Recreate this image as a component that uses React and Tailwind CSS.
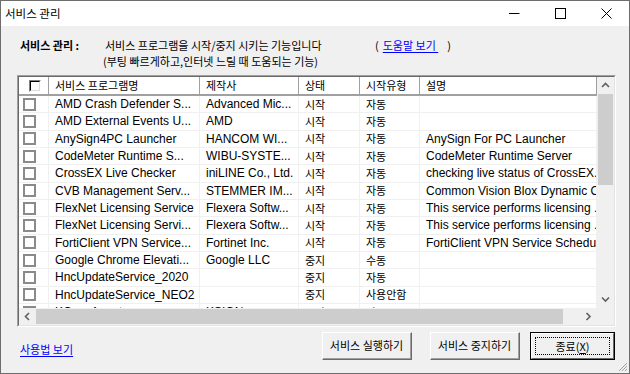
import React from 'react'

const KR = "font-['Noto_Sans_CJK_KR',sans-serif] text-[11px] leading-none"
const EN = "font-['Liberation_Sans','Noto_Sans_CJK_KR',sans-serif] text-[12px] leading-none"

const rows = [
  ['AMD Crash Defender S...', 'Advanced Mic...', '시작', '자동', ''],
  ['AMD External Events U...', 'AMD', '시작', '자동', ''],
  ['AnySign4PC Launcher', 'HANCOM WI...', '시작', '자동', 'AnySign For PC Launcher'],
  ['CodeMeter Runtime S...', 'WIBU-SYSTE...', '시작', '자동', 'CodeMeter Runtime Server'],
  ['CrossEX Live Checker', 'iniLINE Co., Ltd.', '시작', '자동', 'checking live status of CrossEX.'],
  ['CVB Management Serv...', 'STEMMER IM...', '시작', '자동', 'Common Vision Blox Dynamic Overlay'],
  ['FlexNet Licensing Service', 'Flexera Softw...', '시작', '자동', 'This service performs licensing ...'],
  ['FlexNet Licensing Servi...', 'Flexera Softw...', '시작', '자동', 'This service performs licensing ...'],
  ['FortiClient VPN Service...', 'Fortinet Inc.', '시작', '자동', 'FortiClient VPN Service Scheduler'],
  ['Google Chrome Elevati...', 'Google LLC', '중지', '수동', ''],
  ['HncUpdateService_2020', '', '중지', '자동', ''],
  ['HncUpdateService_NEO2', '', '중지', '사용안함', ''],
  ['KCaseAgent', 'KSIGN', '시작', '자동', ''],
  ['KSignCASE', 'KSIGN', '시작', '자동', ''],
]

function Chevron({ dir }) {
  const paths = {
    up: 'M1 5 L4.5 1.5 L8 5',
    down: 'M1 1.5 L4.5 5 L8 1.5',
    left: 'M5 1 L1.5 4.5 L5 8',
    right: 'M1.5 1 L5 4.5 L1.5 8',
  }
  const vert = dir === 'up' || dir === 'down'
  return (
    <svg width={vert ? 9 : 7} height={vert ? 7 : 9} viewBox={vert ? '0 0 9 7' : '0 0 7 9'}>
      <path d={paths[dir]} fill="none" stroke="#606060" strokeWidth="1.6" />
    </svg>
  )
}

function Cell({ w, kr, children }) {
  return (
    <div className={`${w} h-full shrink-0 border-r border-[#f0f0f0] pl-[6px] flex items-center overflow-hidden whitespace-nowrap text-black ${kr ? KR : EN}`}>
      {children}
    </div>
  )
}

function HeadCell({ w, children }) {
  return (
    <div className={`${w} h-full shrink-0 border-r border-[#a0a0a0] pl-[6px] flex items-center overflow-hidden whitespace-nowrap text-black ${KR}`}>
      {children}
    </div>
  )
}

function Button({ children, focused, w }) {
  if (focused) {
    return (
      <div className={`${w} h-[28px] border border-black`}>
        <div className="h-full border border-t-white border-l-white border-r-[#696969] border-b-[#696969] bg-[#f0f0f0] p-[3px]">
          <div className={`h-full border border-dotted border-black flex items-center justify-center ${KR}`}>
            {children}
          </div>
        </div>
      </div>
    )
  }
  return (
    <div className={`${w} h-[28px] border border-t-white border-l-white border-r-[#696969] border-b-[#696969] bg-[#f0f0f0]`}>
      <div className={`h-full border-r border-b border-[#a0a0a0] flex items-center justify-center ${KR}`}>
        {children}
      </div>
    </div>
  )
}

export default function App() {
  return (
    <div className="w-[630px] h-[374px] border border-[#6d6d6d] bg-[#f0f0f0] flex flex-col overflow-hidden">
      {/* 타이틀바 */}
      <div className="h-[25px] bg-white flex items-center shrink-0">
        <span className="pl-[4px] font-['Noto_Sans_CJK_KR',sans-serif] text-[11.5px] text-black">서비스 관리</span>
        <div className="ml-auto flex h-full">
          <div className="w-[46px] flex items-center justify-center">
            <svg width="11" height="11" viewBox="0 0 11 11"><path d="M0 5.5 H10.5" stroke="#000" strokeWidth="1" /></svg>
          </div>
          <div className="w-[46px] flex items-center justify-center">
            <svg width="11" height="11" viewBox="0 0 11 11"><rect x="0.5" y="0.5" width="10" height="10" fill="none" stroke="#000" strokeWidth="1" /></svg>
          </div>
          <div className="w-[46px] flex items-center justify-center">
            <svg width="11" height="11" viewBox="0 0 11 11"><path d="M0.5 0.5 L10.5 10.5 M10.5 0.5 L0.5 10.5" stroke="#000" strokeWidth="1" /></svg>
          </div>
        </div>
      </div>

      {/* 본문 */}
      <div className="relative flex-1 pl-[16px] pr-[13px] pt-[11px]">
        <div className="text-black">
          <div className="h-[16px] flex items-center whitespace-nowrap">
            <span className={`ml-[3px] w-[85px] shrink-0 font-bold ${KR}`}>서비스 관리 :</span>
            <span className={`w-[270px] shrink-0 ${KR}`}>서비스 프로그램을 시작/중지 시키는 기능입니다</span>
            <span className={KR}>(</span>
            <span className={`ml-[4px] text-[#0000ff] underline underline-offset-2 ${KR}`}>도움말 보기&nbsp;</span>
            <span className={`ml-[9px] ${KR}`}>)</span>
          </div>
          <div className="h-[16px] flex items-center">
            <span className={`ml-[86px] ${KR}`}>(부팅 빠르게하고,인터넷 느릴 때 도움되는 기능)</span>
          </div>
        </div>

        {/* 리스트 */}
        <div className="mt-[6px] h-[252px] border border-t-[#a0a0a0] border-l-[#a0a0a0] border-r-white border-b-white">
          <div className="h-full border border-t-[#696969] border-l-[#696969] border-r-[#e3e3e3] border-b-[#e3e3e3] bg-white flex flex-col">
            <div className="flex h-[231px]">
              <div className="w-[578px] flex flex-col">
                <div className="h-[19px] shrink-0 flex border-b-2 border-[#a0a0a0] bg-white">
                  <div className="w-[30px] h-full shrink-0 border-r border-[#a0a0a0] flex items-center pl-[10px]">
                    <div className="w-[12px] h-[12px] border border-t-[#808080] border-l-[#808080] border-r-white border-b-white">
                      <div className="w-full h-full border border-t-black border-l-black border-r-[#dcdcdc] border-b-[#dcdcdc] bg-white" />
                    </div>
                  </div>
                  <HeadCell w="w-[151px]">서비스 프로그램명</HeadCell>
                  <HeadCell w="w-[99px]">제작사</HeadCell>
                  <HeadCell w="w-[61px]">상태</HeadCell>
                  <HeadCell w="w-[60px]">시작유형</HeadCell>
                  <HeadCell w="w-[177px]">설명</HeadCell>
                </div>
                <div className="flex-1 overflow-hidden">
                  {rows.map((r, i) => (
                    <div key={i} className="h-[17.33px] flex border-b border-[#f0f0f0]">
                      <div className="w-[30px] h-full shrink-0 border-r border-[#f0f0f0] flex items-center pl-[4px]">
                        <div className="w-[13px] h-[13px] border-2 border-[#8a8a8a] bg-white" />
                      </div>
                      <Cell w="w-[151px]">{r[0]}</Cell>
                      <Cell w="w-[99px]">{r[1]}</Cell>
                      <Cell w="w-[61px]" kr>{r[2]}</Cell>
                      <Cell w="w-[60px]" kr>{r[3]}</Cell>
                      <Cell w="w-[177px]">{r[4]}</Cell>
                    </div>
                  ))}
                </div>
              </div>
              {/* 세로 스크롤바 */}
              <div className="w-[17px] bg-[#f0f0f0] flex flex-col">
                <div className="h-[17px] flex items-center justify-center"><Chevron dir="up" /></div>
                <div className="h-[91px] mx-[1px] bg-[#cdcdcd]" />
                <div className="flex-1" />
                <div className="h-[17px] flex items-center justify-center"><Chevron dir="down" /></div>
              </div>
            </div>
            {/* 가로 스크롤바 */}
            <div className="h-[17px] flex bg-[#f0f0f0]">
              <div className="w-[17px] flex items-center justify-center"><Chevron dir="left" /></div>
              <div className="w-[527px] my-[1px] bg-[#cdcdcd]" />
              <div className="flex-1" />
              <div className="w-[17px] flex items-center justify-center"><Chevron dir="right" /></div>
              <div className="w-[17px]" />
            </div>
          </div>
        </div>

        {/* 하단 */}
        <div className="mt-[5px] flex items-start">
          <span className={`ml-[3px] mt-[12px] text-[#0000ff] underline underline-offset-2 ${KR}`}>사용법 보기</span>
          <div className="ml-auto mr-[1px] flex">
            <Button w="w-[90px]">서비스 실행하기</Button>
            <div className="w-[18px]" />
            <Button w="w-[90px]">서비스 중지하기</Button>
            <div className="w-[10px]" />
            <Button w="w-[85px]" focused>
              종료(<span className="underline underline-offset-2">X</span>)
            </Button>
          </div>
        </div>

        <svg className="absolute right-[1px] bottom-[1px]" width="10" height="10" viewBox="0 0 10 10">
          <path d="M9 1 L1 9 M9 4 L4 9 M9 7 L7 9" stroke="#a0a0a0" strokeWidth="1" />
        </svg>
      </div>
    </div>
  )
}
